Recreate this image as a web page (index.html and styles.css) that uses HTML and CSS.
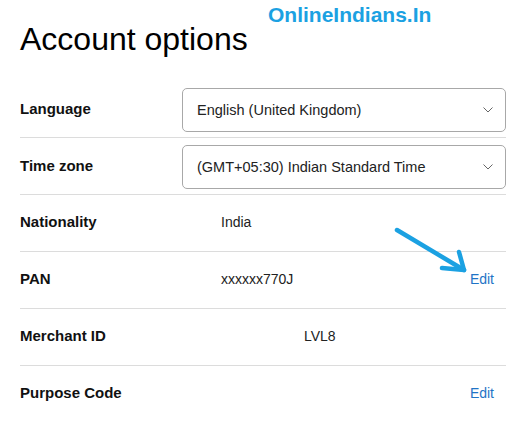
FILE: index.html
```html
<!DOCTYPE html>
<html lang="en">
<head>
    <meta charset="UTF-8">
    <meta name="viewport" content="width=device-width, initial-scale=1.0">
    <title>Account options</title>
    <link rel="stylesheet" href="styles.css">
</head>
<body>
    <div class="page">
        <div class="watermark">OnlineIndians.In</div>

        <h1 class="title">Account options</h1>

        <div class="options">
            <div class="row row-select">
                <span class="label">Language</span>
                <div class="select">
                    <span>English (United Kingdom)</span>
                    <svg class="chevron" width="10" height="6" viewBox="0 0 10 6"><path d="M0.5 0.5 L5 5 L9.5 0.5" fill="none" stroke="#666" stroke-width="1"/></svg>
                </div>
            </div>
            <div class="row row-select">
                <span class="label">Time zone</span>
                <div class="select">
                    <span>(GMT+05:30) Indian Standard Time</span>
                    <svg class="chevron" width="10" height="6" viewBox="0 0 10 6"><path d="M0.5 0.5 L5 5 L9.5 0.5" fill="none" stroke="#666" stroke-width="1"/></svg>
                </div>
            </div>
            <div class="row">
                <span class="label">Nationality</span>
                <span class="value">India</span>
            </div>
            <div class="row">
                <span class="label">PAN</span>
                <span class="value">xxxxxx770J</span>
                <a class="edit" href="#">Edit</a>
            </div>
            <div class="row">
                <span class="label">Merchant ID</span>
                <span class="value value-merchant">LVL8</span>
            </div>
            <div class="row">
                <span class="label">Purpose Code</span>
                <span class="value"></span>
                <a class="edit" href="#">Edit</a>
            </div>
        </div>

        <!-- hand drawn arrow pointing at the PAN edit link -->
        <svg class="arrow" width="529" height="421" viewBox="0 0 529 421">
            <g fill="none" stroke="#1ba1e2" stroke-width="4.5" stroke-linecap="round" stroke-linejoin="round">
                <path d="M397 230 L464 270"/>
                <path d="M459 252 L464 270 L442 268"/>
            </g>
        </svg>
    </div>
</body>
</html>
```

FILE: styles.css
```css
body {
    margin: 0;
    padding: 0;
    font-family: "Liberation Sans", Arial, sans-serif;
    color: #222;
    background: #fff;
}

.page {
    position: relative;
    width: 486px;
    padding-left: 20px;
    height: 421px;
    overflow: hidden;
}

.watermark {
    position: absolute;
    left: 268px;
    top: 4px;
    font-size: 21px;
    line-height: 21px;
    font-weight: bold;
    color: #1ba1e2;
}

.title {
    margin: 21px 0 24px;
    font-size: 32px;
    line-height: 36px;
    font-weight: normal;
    color: #000;
}

.row {
    display: grid;
    grid-template-columns: 201px 1fr auto;
    align-items: center;
    height: 56px;
    border-bottom: 1px solid #dcdcdc;
    font-size: 14px;
}

.row:last-child {
    border-bottom: none;
}

.row-select {
    grid-template-columns: 162px 1fr;
    padding-top: 1px;
    height: 55px;
}

.label {
    font-size: 15px;
    font-weight: bold;
    color: #111;
    padding-bottom: 3px;
}

.value {
    padding-bottom: 3px;
    color: #222;
}

.value-merchant {
    padding-left: 83px;
}

.edit {
    padding-right: 12px;
    padding-bottom: 3px;
    color: #1f74c6;
    text-decoration: none;
}

.select {
    display: flex;
    justify-content: space-between;
    align-items: center;
    height: 42px;
    border: 1px solid #a8a8a8;
    border-radius: 5px;
    padding: 0 12px 0 14px;
    font-size: 14.5px;
    color: #222;
}

.chevron {
    display: block;
}

.arrow {
    position: absolute;
    left: 0;
    top: 0;
    pointer-events: none;
}
```
